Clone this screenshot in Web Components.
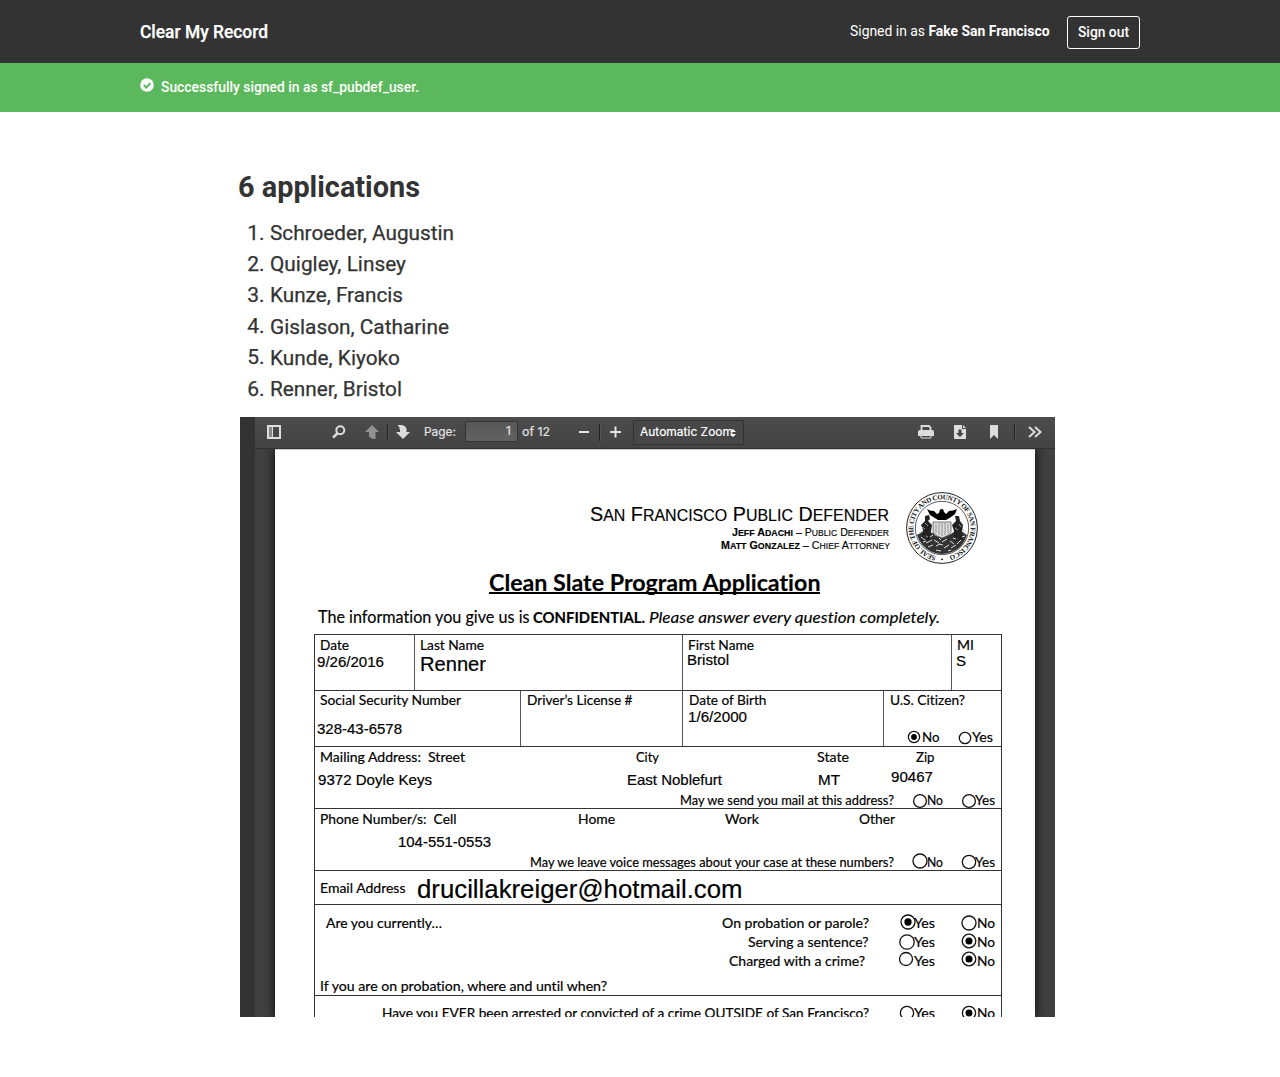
<!DOCTYPE html>
<html lang="en">
<head>
<meta charset="utf-8">
<title>Clear My Record</title>
<style>
html,body{margin:0;padding:0;background:#fff}
body{font-family:Roboto,"Liberation Sans",sans-serif;color:#333;min-height:1077px}
</style>
</head>
<body>
<record-app></record-app>
<script>
const define = (name, css, html) => customElements.define(name, class extends HTMLElement {
  constructor(){ super(); this.attachShadow({mode:'open'}).innerHTML = `<style>${css}</style>${html}`; }
});

/* Text run: w = advance width, s = font size, x / b = left edge and baseline on the page. */
customElements.define('text-run', class extends HTMLElement {
  constructor(){
    super();
    this.attachShadow({mode:'open'}).innerHTML = `<style>
      :host{display:block;flex:none;white-space:pre;line-height:1.2;justify-self:start;align-self:start;font-variant-ligatures:none}
      span{display:inline-block;transform-origin:0 0}
      i{display:inline-block;width:0;height:0}
      ::slotted(small){font-size:.81em}
    </style><span><slot></slot></span><i></i>`;
  }
  connectedCallback(){
    const a = n => this.getAttribute(n), st = this.style;
    const span = this.shadowRoot.querySelector('span'), probe = this.shadowRoot.querySelector('i');
    if (a('s')) st.fontSize = a('s') + 'px';
    if (a('w')) {
      st.width = 'max-content';
      const n = span.getBoundingClientRect().width;
      if (n) span.style.transform = `scaleX(${a('w') / n})`;
      st.width = a('w') + 'px';
    }
    if (a('b')) {
      const base = probe.getBoundingClientRect().bottom - this.getBoundingClientRect().top;
      st.marginTop = `calc(${a('b') - base}px - var(--oy) * 1px)`;
      st.marginLeft = `calc(${a('x') - .4}px - var(--ox) * 1px)`;
    }
  }
});

/* Radio mark of the form: centre x, y and radius r. */
customElements.define('radio-mark', class extends HTMLElement {
  constructor(){ super(); this.attachShadow({mode:'open'}); }
  connectedCallback(){
    const n = k => +this.getAttribute(k), r = n('r');
    this.shadowRoot.innerHTML = `<style>:host{display:block;justify-self:start;align-self:start;line-height:0;
      margin:calc(${n('y')-10}px - var(--oy)*1px) 0 -10px calc(${n('x')-10}px - var(--ox)*1px)}</style>
      <svg width="20" height="20"><circle cx="10" cy="10" r="${r}" fill="none" stroke="#111" stroke-width="1.3"/>
      ${this.hasAttribute('checked') ? `<circle cx="10" cy="10" r="${r*.52}" fill="#000"/>` : ''}</svg>`;
  }
});

/* Region of the page whose children share one grid area. */
customElements.define('page-region', class extends HTMLElement {
  constructor(){
    super();
    this.attachShadow({mode:'open'}).innerHTML = `<style>
      :host{display:grid;grid-template:100%/100%;box-sizing:border-box;min-width:0}
      ::slotted(*){grid-area:1/1}</style><slot></slot>`;
  }
  connectedCallback(){
    const [x,y] = this.getAttribute('origin').split(' ');
    this.style.setProperty('--ox', x); this.style.setProperty('--oy', y);
    if (this.hasAttribute('w')) { this.style.width = this.getAttribute('w') + 'px'; this.style.flex = 'none'; this.style.borderRight = '1px solid #555'; }
    else this.style.flex = '1';
  }
});

define('form-row', `:host{display:flex;box-sizing:border-box;border-bottom:1px solid #333}`, `<slot></slot>`);

define('city-seal', `:host{display:block;line-height:0;justify-self:start;align-self:start;margin:calc(491.3px - var(--oy)*1px) 0 0 calc(904.6px - var(--ox)*1px)}
  text{font:bold 7px "Liberation Serif",serif;fill:#111}`, `
<svg width="74" height="74" viewBox="-37 -37 74 74">
  <defs><path id="ring" d="M0 28.7A28.7 28.7 0 0 1 0 -28.7A28.7 28.7 0 0 1 0 28.7"/></defs>
  <circle r="35.4" fill="none" stroke="#222" stroke-width="1"/>
  <circle r="26.7" fill="none" stroke="#333" stroke-width=".8"/>
  <text><textPath href="#ring" startOffset="6" textLength="167">SEAL OF THE CITY AND COUNTY OF SAN FRANCISCO</textPath></text>
  <circle cy="31.3" r=".9"/>
  <path d="M-25 7L-18 3L-9 5L-6 8L0 9L7 7L12 4L19 3L25 7Q21 20 10 24Q0 28 -10 24Q-21 19 -25 7Z" fill="#333"/>
  <path d="M-15 -19L-12 -17.5L-8 -17L-5 -14L-3 -15L-2 -18.5L1 -19L2 -16L4 -14L7 -17L11 -17.5L15 -19L13 -14L9 -11L4 -8L-4 -8L-8 -10.5L-12 -13Z"/>
  <path d="M-9 -6H9V4Q7 8 0 10Q-7 8 -9 4Z" fill="#ddd" stroke="#444" stroke-width=".7"/>
  <path d="M-6 5V-4M-3 7V-5M0 8V-5M3 7V-5M6 5V-4" stroke="#777" stroke-width=".7"/>
  <path d="M-17 -12L-13 -13L-12 -9L-14 -7L-10 -3L-11 3L-12 13L-15 13L-16 5L-18 13L-21 12L-19 2L-21 -3L-17 -7Z" fill="#222"/>
  <path d="M13 -12L17 -12L18 -7L21 -3L20 4L21 13L17 12L16 5L15 14L12 13L12 3L10 -3L14 -7Z" fill="#222"/>
  <path d="M-21 9l4 3M-16 15l6-3M-14 19l5-2M-8 12l5 3M-6 18l4-2M-6 22l5 1M0 14l5-3M2 20l5-3M8 13l4 3M9 20l5-3M15 16l4-4M-1 12l-2-2M6 23l3-1M-12 9l3-2M20 9l3-1M-19 14l3-1M-3 16l4 1M11 10l3 1" stroke="#ddd" stroke-width="1"/>
  <path d="M-20 -1l3 2M-17 -5l3 3M-16 8l2 1M17 -4l2 3M13 0l3 2M-23 5l3-2M23 5l-2-4" stroke="#bbb" stroke-width=".8"/>
</svg>`);

define('site-header', `:host{display:block;background:#333;color:#fff}
  .in{width:1000px;height:63px;margin:0 auto;display:flex;align-items:center}
  text-run{align-self:center}
  .brand{margin-right:auto;font-weight:500;-webkit-text-stroke:.25px #fff}
  b{font-weight:700}
  button{all:unset;box-sizing:border-box;width:73px;height:33px;border:1px solid #fff;border-radius:3px;margin:2px 0 0 17.5px;display:flex;justify-content:center;align-items:center;font-weight:500}`, `
<div class="in"><text-run class="brand" s="18" w="128">Clear My Record</text-run>
<text-run s="14.5" w="199.5">Signed in as <b>Fake San Francisco</b></text-run>
<button><text-run s="14.5" w="51">Sign out</text-run></button></div>`);

define('flash-notice', `:host{display:block;background:#5cb85c;color:#fff}
  .in{width:1000px;height:49px;margin:0 auto;display:flex;align-items:center;font-weight:500}
  svg{margin:-5px 7px 0 0}text-run{align-self:center}`, `
<div class="in"><svg width="14" height="14"><circle cx="7" cy="7" r="6.8" fill="#fff"/><path d="M3.8 7.1l2.3 2.3 4.3-4.2" fill="none" stroke="#5cb85c" stroke-width="2.1"/></svg>
<text-run s="14.5" w="258">Successfully signed in as sf_pubdef_user.</text-run></div>`);

define('applicant-item', `:host{display:flex;height:31.2px;font-size:21px;align-items:center;-webkit-text-stroke:.25px #333}
 span{width:24.5px;text-align:right;margin-right:5px;flex:none}`, `<span><slot name="n"></slot></span><slot></slot>`);

define('applicant-list', `:host{display:block}
 h1{margin:0 0 12px -2px;font-size:30px;line-height:36px;font-weight:700}text-run{align-self:center}applicant-item text-run{padding-top:2px}`, `
<h1><text-run s="30" w="182">6 applications</text-run></h1>` +
[['Schroeder, Augustin',184],['Quigley, Linsey',136],['Kunze, Francis',133],['Gislason, Catharine',179],['Kunde, Kiyoko',130],['Renner, Bristol',132]]
 .map(([t,w],i)=>`<applicant-item><span slot="n">${i+1}.</span><text-run w="${w}">${t}</text-run></applicant-item>`).join(''));

define('viewer-toolbar', `:host{display:flex;align-items:center;box-sizing:border-box;height:32px;padding:0 13px 1px 12px;
  background:linear-gradient(#4c4c4c,#434343);border-bottom:1px solid #303030;color:#e2e2e2;font-family:Inter,sans-serif}
 svg{flex:none;display:block}text-run{align-self:center;-webkit-text-stroke:.2px}
 .sep{width:1px;height:17px;background:#222;border-right:1px solid #555;flex:none}
 .num{box-sizing:border-box;width:53px;height:21px;margin:-1px 4px 0 9px;border:1px solid #343434;border-radius:2px;background:linear-gradient(#585858,#626262);display:flex;justify-content:flex-end;align-items:center;padding-right:6px}
 .sel{box-sizing:border-box;width:111px;height:25px;margin:1px 0 0 12px;border:1px solid #333;border-radius:2px;background:#474747;display:flex;align-items:center;padding-left:6px;color:#fff}
 .push{margin-left:auto}`, `
<svg width="14" height="14"><rect x="1" y="1" width="12" height="12" fill="none" stroke="#ddd" stroke-width="2"/><path d="M2 2h3v10H2z" fill="#888"/><path d="M5.5 1v12" stroke="#ddd"/></svg>
<svg width="14" height="14" style="margin-left:51px"><circle cx="8.3" cy="5.3" r="4" fill="none" stroke="#ddd" stroke-width="2"/><path d="M5.3 8.5L1 12.6" stroke="#ddd" stroke-width="2.6"/></svg>
<svg width="14" height="14" style="margin-left:19px"><path d="M7 0L14 7H10.5V14H9Q5 13.5 4 11V7H0Z" fill="#929292"/></svg>
<i class="sep" style="margin-left:8px"></i>
<svg width="14" height="14" style="margin-left:7px"><path d="M7 14L0 7H4V5Q4 2 1.5 0H6Q10 1 10.5 4V7H14Z" fill="#ddd"/></svg>
<text-run s="12" w="32" style="margin-left:14px">Page:</text-run>
<div class="num"><text-run s="12">1</text-run></div><text-run s="12" w="28">of 12</text-run>
<svg width="10" height="14" style="margin-left:29px"><path d="M0 7h10" stroke="#e2e2e2" stroke-width="2"/></svg>
<i class="sep" style="margin-left:10px"></i>
<svg width="11" height="14" style="margin-left:9px"><path d="M0 7h11M5.5 1.5v11" stroke="#e2e2e2" stroke-width="2"/></svg>
<div class="sel"><text-run s="12" w="93">Automatic Zoom</text-run><svg width="6" height="8" style="margin-left:-3px"><path d="M0 3L3 0L6 3zM0 5H6L3 8z" fill="#fff"/></svg></div>
<svg class="push" width="16" height="14"><path d="M3.5 5V1H11L12.5 2.5V5" fill="none" stroke="#ddd" stroke-width="1.8"/><path d="M2 5H14Q16 5 16 7V11H0V7Q0 5 2 5Z" fill="#ddd"/><path d="M3 10.5H13V13H3Z" fill="#474747" stroke="#ddd"/></svg>
<svg width="12" height="14" style="margin-left:20px"><path d="M0 0H8V4H12V14H0Z" fill="#ddd"/><path d="M9 0L12 3H9Z" fill="#ddd"/><path d="M4.5 4.5H7.5V8H10L6 12L2 8H4.5Z" fill="#444"/></svg>
<svg width="8" height="14" style="margin-left:24px"><path d="M0 0H8V14L4 10L0 14Z" fill="#ddd"/></svg>
<i class="sep" style="margin-left:16px"></i>
<svg width="14" height="12" style="margin-left:12px"><path d="M1 1L6.5 6L1 11M7 1L12.5 6L7 11" fill="none" stroke="#ddd" stroke-width="2"/></svg>`);

const T = (x,b,w,s,t,c='') => `<text-run class="${c}" x="${x}" b="${b}" w="${w}" s="${s}">${t}</text-run>`;
const V = (x,b,w,s,t) => T(x,b,w,s,t,'v');
const R = (x,y,r,on) => `<radio-mark x="${x}" y="${y}" r="${r}" ${on?'checked':''}></radio-mark>`;
const C = (x,y,w,inner) => `<page-region origin="${x} ${y}" ${w?`w="${w}"`:''}>${inner}</page-region>`;
const ROW = (h,inner) => `<form-row style="height:${h}px">${inner}</form-row>`;

define('pdf-page', `:host{display:block;box-sizing:border-box;width:760px;height:568px;overflow:hidden;background:#fff;color:#000;border-top:1px solid #ccc;font-family:Lato,sans-serif;box-shadow:0 0 9px 1px #111}
 .head{height:184px;-webkit-text-stroke:.15px #000}
 .v{font-family:"Liberation Sans",Arial,sans-serif}
 .title{font-weight:700;border-bottom:2px solid #000;height:23px}
 .form{box-sizing:border-box;width:688px;margin-left:39px;border:1px solid #333;border-bottom:0;-webkit-text-stroke:.2px #000}`,
`<page-region class="head" origin="275 450">` +
V(590.5,521,299,20,'S<small>AN</small> F<small>RANCISCO</small> P<small>UBLIC</small> D<small>EFENDER</small>') +
V(732.5,535.5,157,11,'<b>J<small>EFF</small> A<small>DACHI</small></b> – P<small>UBLIC</small> D<small>EFENDER</small>') +
V(721,548.5,169,11,'<b>M<small>ATT</small> G<small>ONZALEZ</small></b> – C<small>HIEF</small> A<small>TTORNEY</small>') +
`<city-seal></city-seal>` +
T(489,591,331.5,22.5,'Clean Slate Program Application','title') +
T(318,622.5,211.5,16.3,'The information you give us is') +
T(533,622.5,112,16,'<b>CONFIDENTIAL.</b>') +
T(649.5,622.5,291,16.3,'<em>Please answer every question completely.</em>') +
`</page-region><div class="form">` +
ROW(56, C(315,635,100, T(320,649.5,29,13.8,'Date')+V(317.5,666.5,67,15,'9/26/2016')) +
 C(415,635,268, T(420.5,649.5,64,13.8,'Last Name')+V(420.7,670.5,66,19.5,'Renner')) +
 C(683,635,269, T(688.7,649.5,66,13.8,'First Name')+V(687,665,42,14.8,'Bristol')) +
 C(952,635,0, T(957,649.5,17,13.8,'MI')+V(956.5,666,10,15,'S'))) +
ROW(56, C(315,691,206, T(320,705,141,13.8,'Social Security Number')+V(317.5,734,85,15,'328-43-6578')) +
 C(521,691,162, T(527,705,105.5,13.8,'Driver’s License #')) +
 C(683,691,201, T(689,705,77.5,13.8,'Date of Birth')+V(688,721.5,59,15,'1/6/2000')) +
 C(884,691,0, T(890.5,705,75,13.8,'U.S. Citizen?')+R(914,736.7,5.6,1)+T(922.7,742,17.5,13.8,'No')+R(964.7,737.6,5.7)+T(972.3,742,21,13.8,'Yes'))) +
ROW(62, C(315,747,0, T(320,761.5,145,13.8,'Mailing Address:&nbsp; Street')+T(636.5,761.5,23,13.8,'City')+T(817.5,761.5,32,13.8,'State')+T(916.5,761.5,18.5,13.8,'Zip') +
 V(318,785,114,15,'9372 Doyle Keys')+V(627,784.5,95,15,'East Noblefurt')+V(818.5,784.5,22,15,'MT')+V(891,782,42,15,'90467') +
 T(680.5,805,214,13,'May we send you mail at this address?')+R(920,800.7,6.4)+T(927.5,805,16,13,'No')+R(968.5,800.7,6.4)+T(975.7,805,20,13,'Yes'))) +
ROW(62, C(315,809,0, T(320,823.5,136.5,13.8,'Phone Number/s:&nbsp; Cell')+T(578,823.5,37,13.8,'Home')+T(725.7,823.5,34,13.8,'Work')+T(859.5,823.5,36,13.8,'Other') +
 V(398,846.5,93,15,'104-551-0553') +
 T(530.7,867,364,13,'May we leave voice messages about your case at these numbers?')+R(919.7,861.3,7)+T(927.5,867,16,13,'No')+R(968.5,862,6.7)+T(975.7,867,20,13,'Yes'))) +
ROW(34, C(315,871,0, T(320,893,85.5,13.8,'Email Address')+V(417.5,897.5,325.5,26.5,'drucillakreiger@hotmail.com'))) +
ROW(91, C(315,905,0, T(326.5,927.5,116,14,'Are you currently…') +
 T(722,927.5,147,14,'On probation or parole?')+R(908,922.3,7,1)+T(914.5,927.5,21,14,'Yes')+R(969,923,7)+T(977.5,927.5,18,14,'No') +
 T(748,946.5,120.5,14,'Serving a sentence?')+R(907,941.5,7.2)+T(914.5,946.5,21,14,'Yes')+R(968.5,940.8,6.8,1)+T(977.5,946.5,18,14,'No') +
 T(729.5,965.5,136,14,'Charged with a crime?')+R(906,959,6.5)+T(914.5,965.5,21,14,'Yes')+R(968.5,958.5,6.8,1)+T(977.5,965.5,18,14,'No') +
 T(320,991,287,14,'If you are on probation, where and until when?'))) +
ROW(60, C(315,996,0, T(382,1018,487,14,'Have you EVER been arrested or convicted of a crime OUTSIDE of San Francisco?')+R(907,1012.5,6.6)+T(914.5,1018,21,14,'Yes')+R(969,1013,6.6,1)+T(977.5,1018,18,14,'No'))) +
`</div>`);

define('pdf-viewer', `:host{display:block;box-sizing:border-box;width:815px;height:600px;padding-left:15px;background:#333;overflow:hidden}
 .body{height:568px;display:flex;justify-content:center;background:#404040;overflow:hidden}`, `
<viewer-toolbar></viewer-toolbar><div class="body"><pdf-page></pdf-page></div>`);

define('record-app', `:host{display:block}
 main{width:815px;margin:57px 0 0 240px}pdf-viewer{margin-top:13px}`, `
<site-header></site-header><flash-notice></flash-notice><main><applicant-list></applicant-list><pdf-viewer></pdf-viewer></main>`);
</script>
</body>
</html>
